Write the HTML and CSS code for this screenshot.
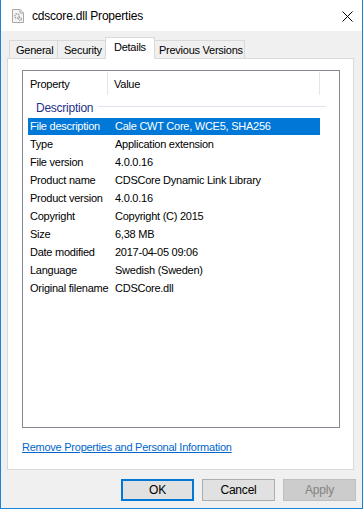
FILE: index.html
```html
<!DOCTYPE html>
<html lang="en">
<head>
    <meta charset="UTF-8">
    <title>cdscore.dll Properties</title>
    <link rel="stylesheet" href="styles.css">
</head>
<body>
    <div class="window">
        <div class="titlebar">
            <svg class="app-icon" width="12" height="14" viewBox="0 0 12 14">
                <path d="M0.5 0.5 H8 L11.5 4 V13.5 H0.5 Z" fill="#f4f4f4" stroke="#a8a8a8"/>
                <path d="M8 0.5 V4 H11.5" fill="none" stroke="#a8a8a8"/>
                <circle cx="5" cy="7" r="2.2" fill="none" stroke="#9a9a9a" stroke-width="1.4" stroke-dasharray="1.2 0.8"/>
                <circle cx="8" cy="10" r="1.4" fill="none" stroke="#9a9a9a" stroke-width="1.2" stroke-dasharray="1 0.7"/>
            </svg>
            <span class="title">cdscore.dll Properties</span>
            <svg class="close" width="11" height="11" viewBox="0 0 11 11">
                <path d="M0.5 0.5 L10.5 10.5 M10.5 0.5 L0.5 10.5" stroke="#000" stroke-width="1"/>
            </svg>
        </div>

        <div class="tabs">
            <div class="tab tab-general">General</div>
            <div class="tab tab-security">Security</div>
            <div class="tab tab-details active">Details</div>
            <div class="tab tab-versions">Previous Versions</div>
        </div>

        <div class="panel">
            <div class="listview">
                <div class="lv-header">
                    <div class="col-prop">Property</div>
                    <div class="col-value">Value</div>
                </div>
                <div class="group">
                    <span>Description</span>
                    <div class="group-line"></div>
                </div>
                <div class="row selected"><div class="c1">File description</div><div class="c2">Cale CWT Core, WCE5, SHA256</div></div>
                <div class="row"><div class="c1">Type</div><div class="c2">Application extension</div></div>
                <div class="row"><div class="c1">File version</div><div class="c2">4.0.0.16</div></div>
                <div class="row"><div class="c1">Product name</div><div class="c2">CDSCore Dynamic Link Library</div></div>
                <div class="row"><div class="c1">Product version</div><div class="c2">4.0.0.16</div></div>
                <div class="row"><div class="c1">Copyright</div><div class="c2">Copyright (C) 2015</div></div>
                <div class="row"><div class="c1">Size</div><div class="c2">6,38 MB</div></div>
                <div class="row"><div class="c1">Date modified</div><div class="c2">2017-04-05 09:06</div></div>
                <div class="row"><div class="c1">Language</div><div class="c2">Swedish (Sweden)</div></div>
                <div class="row"><div class="c1">Original filename</div><div class="c2">CDSCore.dll</div></div>
            </div>
            <a class="link" href="#">Remove Properties and Personal Information</a>
        </div>

        <div class="buttons">
            <button class="btn default">OK</button>
            <button class="btn">Cancel</button>
            <button class="btn" disabled>Apply</button>
        </div>
    </div>
</body>
</html>
```

FILE: styles.css
```css
body {
    margin: 0;
    font-family: "Liberation Sans", Arial, sans-serif;
    font-size: 11px;
    letter-spacing: -0.25px;
    color: #000;
}

.window {
    width: 363px;
    height: 509px;
    box-sizing: border-box;
    border: 1px solid #1883d7;
    border-top: none;
    background-color: #f0f0f0;
    display: flex;
    flex-direction: column;
}

.titlebar {
    height: 31px;
    background-color: #fff;
    display: flex;
    align-items: center;
    padding-left: 11px;
    padding-right: 9px;
}

.app-icon {
    margin-right: 8px;
}

.title {
    font-size: 12px;
    letter-spacing: -0.2px;
    flex: 1;
}

.close {
    margin-top: 1px;
}

.tabs {
    display: flex;
    align-items: flex-end;
    height: 22px;
    margin: 6px 0 -1px 8px;
    position: relative;
    z-index: 1;
    white-space: nowrap;
}

.tab {
    height: 19px;
    box-sizing: border-box;
    border: 1px solid #d9d9d9;
    line-height: 18px;
    padding-left: 6px;
    margin-left: -1px;
    background-color: #f0f0f0;
}

.tab-general { width: 49px; margin-left: 0; }
.tab-security { width: 50px; }
.tab-details { width: 50px; }
.tab-versions { width: 93px; }

.tab.active {
    height: 22px;
    background-color: #fff;
    border-bottom: 1px solid #fff;
    margin-left: -2px;
    margin-right: -2px;
    padding-left: 8px;
    line-height: 18px;
    position: relative;
    z-index: 2;
}

.panel {
    margin: 0 8px 0 6px;
    height: 412px;
    box-sizing: border-box;
    border: 1px solid #d9d9d9;
    background-color: #fff;
    padding: 11px 0 0 14px;
}

.listview {
    width: 318px;
    height: 358px;
    box-sizing: border-box;
    border: 1px solid #828790;
    white-space: nowrap;
}

.lv-header {
    display: flex;
    height: 25px;
    align-items: center;
}

.col-prop {
    width: 85px;
    box-sizing: border-box;
    padding-left: 7px;
    border-right: 1px solid #e5e5e5;
    height: 23px;
    line-height: 25px;
}

.col-value {
    width: 212px;
    box-sizing: border-box;
    padding-left: 6px;
    border-right: 1px solid #e5e5e5;
    height: 23px;
    line-height: 25px;
}

.group {
    display: flex;
    align-items: center;
    height: 21px;
    padding: 1px 0 0 13px;
    color: #1e3287;
    font-size: 12px;
}

.group-line {
    width: 228px;
    height: 1px;
    background-color: #dde4f0;
    margin-left: 5px;
    margin-top: -3px;
}

.row {
    display: flex;
    height: 17px;
    line-height: 17px;
    margin: 0 0 1px 5px;
    width: 292px;
}

.row .c1 {
    width: 87px;
    flex-shrink: 0;
    padding-left: 2px;
    box-sizing: border-box;
}

.row.selected {
    background-color: #0078d7;
    color: #fff;
}

.link {
    display: inline-block;
    margin-top: 13px;
    color: #0066cc;
    text-decoration: underline;
}

.buttons {
    display: flex;
    justify-content: flex-end;
    gap: 8px;
    padding: 9px 6px 0 0;
}

.btn {
    width: 73px;
    height: 22px;
    box-sizing: border-box;
    border: 1px solid #adadad;
    background-color: #e1e1e1;
    font-family: "Liberation Sans", Arial, sans-serif;
    font-size: 12px;
    letter-spacing: -0.2px;
    color: #000;
    padding: 0;
}

.btn.default {
    border: 2px solid #0078d7;
}

.btn:disabled {
    background-color: #cccccc;
    border-color: #bfbfbf;
    color: #838383;
}
```
